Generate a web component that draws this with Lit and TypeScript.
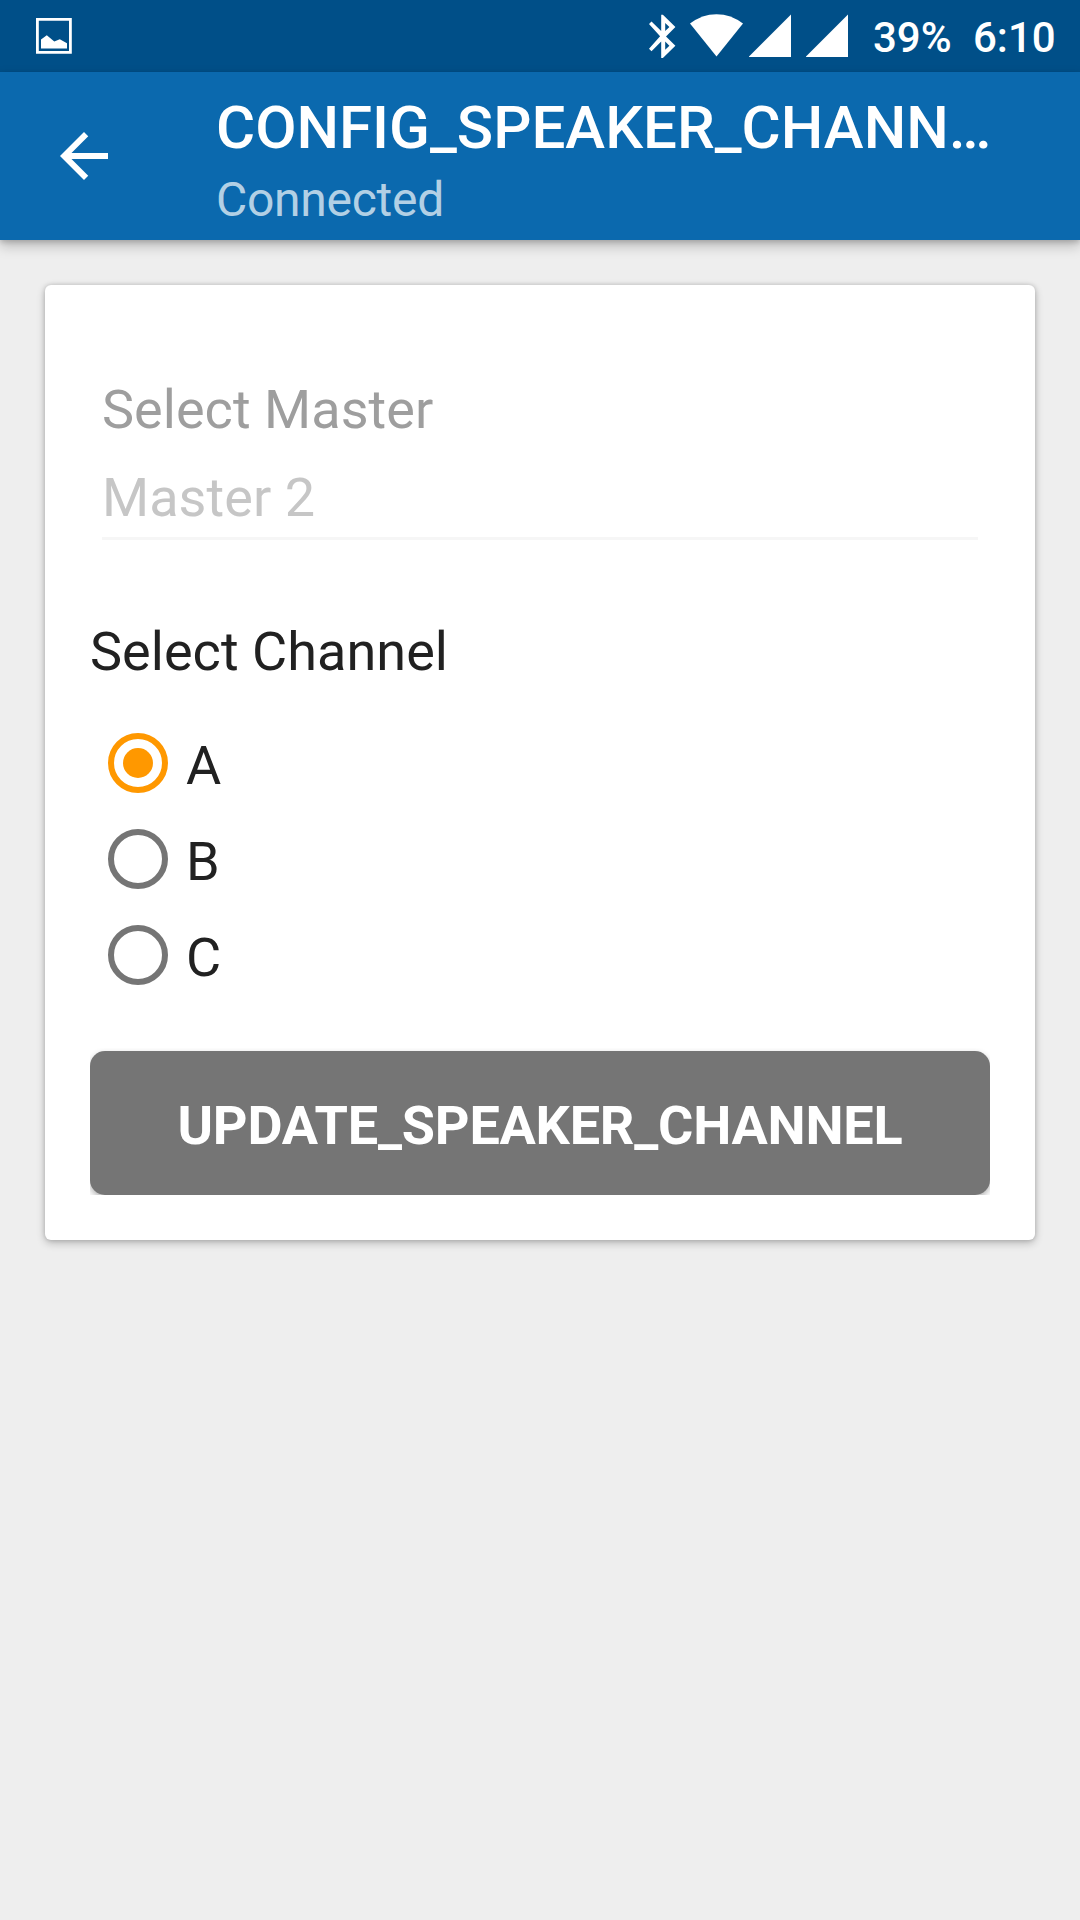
import { LitElement, html, css, svg } from "lit";
import { customElement, property, state } from "lit/decorators.js";

@customElement("status-bar")
class StatusBar extends LitElement {
  static styles = css`
    :host {
      display: flex;
      align-items: flex-start;
      box-sizing: border-box;
      height: 72px;
      padding: 0 24px 0 36px;
      background: #004f88;
      color: #fff;
      font: 500 42px/49px Roboto, sans-serif;
    }
    svg { display: block; flex: none; fill: #fff; }
    .picture { margin-top: 18px; }
    .spacer { flex: 1; }
    .icons { display: flex; padding-top: 14px; }
    .bt { margin-right: 14px; }
    .wifi { margin-right: 6px; }
    .cell { margin-right: 15px; }
    .battery { width: 100px; margin: 13px 0 0 10px; white-space: nowrap; }
    .clock { width: 83px; margin-top: 13px; white-space: nowrap; }
  `;
  render() {
    const cell = html`<svg class="cell" width="42" height="43" viewBox="0 0 42 43"><path d="M42 0.5V43H-0.5z"/></svg>`;
    return html`
      <svg class="picture" width="36" height="36" viewBox="0 0 36 36">
        <path fill-rule="evenodd" d="M0 0H35.8V35.8H0zM2.8 2.8V33H33V2.8z"/>
        <path d="M5 30.6V21.5L10.8 17.2L18.3 23.6L23.8 21.2L31 25.2V30.6z"/>
      </svg>
      <div class="spacer"></div>
      <div class="icons">
        <svg class="bt" width="27" height="44" viewBox="0 0 27 44">
          <path d="M26.4 13L13.9 0.7H12.2V17L2.5 7.4L0 10L11.1 22.2L0 34.7L2.5 37.3L12.2 27.5V44H13.9L26.4 31.7L17 22.4zM16.2 8.9L20.4 13L16.2 17zM20.4 31.7L16.2 35.8V27.6z"/>
        </svg>
        <svg class="wifi" width="53" height="43" viewBox="0 0 53 43">
          <path d="M26.5 42.5L0 9.6Q12 0.2 26.5 0.2T53 9.6z"/>
        </svg>
        ${cell}${cell}
      </div>
      <span class="battery">39%</span>
      <span class="clock">6:10</span>
    `;
  }
}

@customElement("radio-row")
class RadioRow extends LitElement {
  @property() label = "";
  @property({ type: Boolean }) checked = false;
  static styles = css`
    :host {
      display: flex;
      align-items: flex-start;
      height: 96px;
      font: 400 54px/63px Roboto, sans-serif;
      color: #212121;
    }
    svg { display: block; fill: none; stroke: #757575; stroke-width: 6; }
    .on { stroke: #ff9800; }
    .dot { fill: #ff9800; stroke: none; }
    .label { margin-top: 19px; }
  `;
  render() {
    return html`
      <svg class=${this.checked ? "on" : "off"} width="96" height="96" viewBox="0 0 96 96">
        <circle cx="48" cy="48" r="27"/>
        ${this.checked ? svg`<circle class="dot" cx="48" cy="48" r="15"/>` : null}
      </svg>
      <span class="label">${this.label}</span>
    `;
  }
}

@customElement("app-root")
class AppRoot extends LitElement {
  @state() channel = "A";
  static styles = css`
    :host {
      display: block;
      box-sizing: border-box;
      height: 1920px;
      background: #eeeeee;
      font-family: Roboto, sans-serif;
      color: #212121;
    }
    .bar {
      display: flex;
      align-items: flex-start;
      box-sizing: border-box;
      height: 168px;
      padding-left: 48px;
      background: #0b69ae;
      box-shadow: 0 6px 12px rgba(0, 0, 0, 0.22), 0 2px 5px rgba(0, 0, 0, 0.16);
      color: #fff;
    }
    .back { display: block; flex: none; margin: 48px 96px 0 0; fill: #fff; }
    .titles { display: flex; flex-direction: column; gap: 8px; padding-top: 20px; }
    .title { font-size: 60px; line-height: 71px; font-weight: 500; white-space: nowrap; }
    .subtitle { font-size: 48px; line-height: 57px; letter-spacing: -0.27px; color: rgba(255, 255, 255, 0.7); }
    .card {
      display: flex;
      flex-direction: column;
      box-sizing: border-box;
      height: 955px;
      margin: 45px 45px 0;
      padding: 93px 45px 45px;
      background: #fff;
      border-radius: 6px;
      box-shadow: 0 3px 8px rgba(0, 0, 0, 0.24), 0 0 4px rgba(0, 0, 0, 0.16);
      font-size: 54px;
      line-height: 63px;
      letter-spacing: 0.04px;
    }
    .field {
      display: flex;
      flex-direction: column;
      gap: 25px;
      margin: 0 12px;
      padding-bottom: 8px;
      border-bottom: 3px solid #f6f6f6;
    }
    .hint { color: #9e9e9e; }
    .value { color: #c6c6c6; }
    .heading { margin-top: 80px; }
    .options { display: flex; flex-direction: column; margin-top: 32px; }
    .clip { overflow: hidden; margin-top: auto; margin-bottom: 0; padding-top: 3px; }
    .button {
      display: block;
      box-sizing: border-box;
      width: 100%;
      height: 144px;
      margin: 0;
      padding: 5px 0 0;
      border: 0;
      border-radius: 15px;
      background: #757575;
      box-shadow: 0 3px 6px rgba(0, 0, 0, 0.3);
      color: #fff;
      font: 700 54px/63px Roboto, sans-serif;
      letter-spacing: -0.22px;
      text-align: center;
    }
  `;
  render() {
    return html`
      <status-bar></status-bar>
      <header class="bar">
        <svg class="back" width="72" height="72" viewBox="0 0 24 24">
          <path d="M20 11H7.83l5.59-5.59L12 4l-8 8 8 8 1.41-1.41L7.83 13H20v-2z"/>
        </svg>
        <div class="titles">
          <div class="title">CONFIG_SPEAKER_CHANN…</div>
          <div class="subtitle">Connected</div>
        </div>
      </header>
      <main class="card">
        <div class="field">
          <div class="hint">Select Master</div>
          <div class="value">Master 2</div>
        </div>
        <div class="heading">Select Channel</div>
        <div class="options">
          ${["A", "B", "C"].map(
            (c) => html`<radio-row label=${c} ?checked=${this.channel === c} @click=${() => (this.channel = c)}></radio-row>`
          )}
        </div>
        <div class="clip"><button class="button">UPDATE_SPEAKER_CHANNEL</button></div>
      </main>
    `;
  }
}
